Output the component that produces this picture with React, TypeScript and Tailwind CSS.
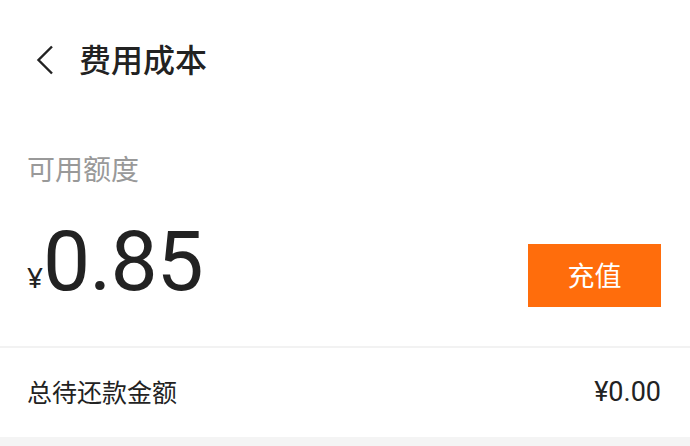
import React from "react";

const font = { fontFamily: '"Noto Sans", "Noto Sans CJK SC", sans-serif' };

const App: React.FC = () => {
  return (
    <div className="w-[690px] h-[446px] bg-white flex flex-col text-[#222]" style={font}>
      <div className="h-[122px] flex items-center pl-[36px] pb-[2px]">
        <svg width="18" height="30" viewBox="0 0 18 30" className="mr-[25px]">
          <path d="M16 1.5 L2.5 15 L16 28.5" fill="none" stroke="#222" strokeWidth="2.4" />
        </svg>
        <span className="text-[32px] font-medium leading-none">费用成本</span>
      </div>

      <div className="pl-[27px] pr-[29px] h-[224px] flex flex-col">
        <div className="text-[28px] text-[#999] leading-none mt-[33px]">可用额度</div>
        <div className="flex items-end justify-between mt-[37px]">
          <div className="flex items-end">
            <span className="text-[28px] leading-none mb-[13px]">¥</span>
            <span className="text-[84px] leading-none tracking-[-1px]" style={{ fontFamily: "Roboto, sans-serif" }}>0.85</span>
          </div>
          <button className="w-[133px] h-[63px] bg-[#ff6d0c] text-white text-[27px] leading-none flex items-center justify-center mb-[-3px]">
            充值
          </button>
        </div>
      </div>

      <div className="h-[2px] bg-[#f2f2f2]" />

      <div className="h-[89px] flex items-center justify-between pl-[27px] pr-[29px]">
        <span className="text-[25px] leading-none">总待还款金额</span>
        <span className="text-[27px] leading-none" style={{ fontFamily: "Roboto, sans-serif" }}>¥0.00</span>
      </div>
      <div className="flex-1 bg-[#f4f4f4]" />
    </div>
  );
};

export default App;
